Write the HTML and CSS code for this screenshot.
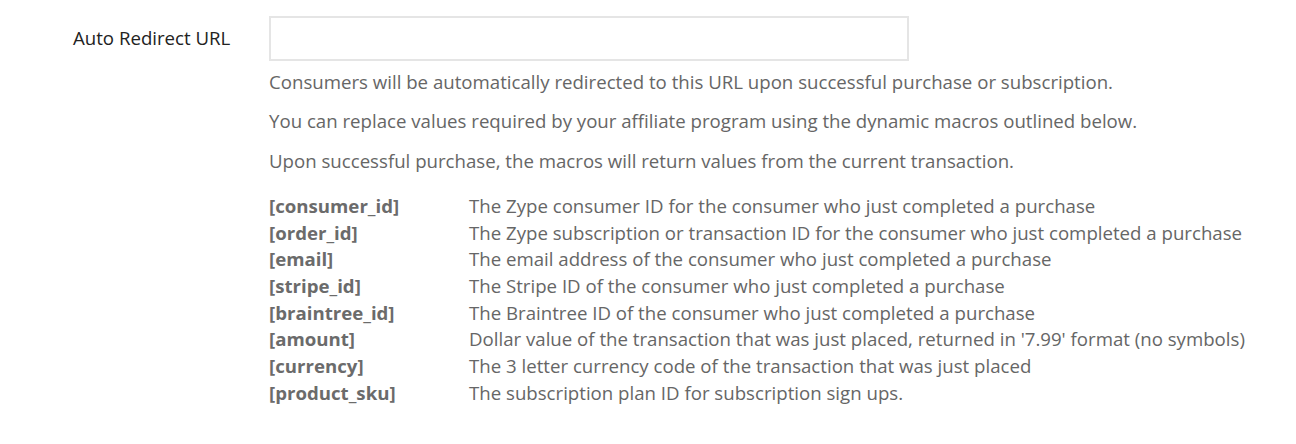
FILE: index.html
```html
<!DOCTYPE html>
<html lang="en">
<head>
  <meta charset="UTF-8" />
  <meta name="viewport" content="width=device-width, initial-scale=1.0" />
  <title>Auto Redirect URL</title>
  <link rel="stylesheet" href="styles.css">
</head>
<body>
  <div class="form-row">
    <label class="form-label" for="redirect-url">Auto Redirect URL</label>
    <div class="form-field">
      <input type="text" id="redirect-url" name="redirect-url" />
      <p class="help">Consumers will be automatically redirected to this URL upon successful purchase or subscription.</p>
      <p class="help">You can replace values required by your affiliate program using the dynamic macros outlined below.</p>
      <p class="help">Upon successful purchase, the macros will return values from the current transaction.</p>

      <table class="macros">
        <tr><th>[consumer_id]</th><td>The Zype consumer ID for the consumer who just completed a purchase</td></tr>
        <tr><th>[order_id]</th><td>The Zype subscription or transaction ID for the consumer who just completed a purchase</td></tr>
        <tr><th>[email]</th><td>The email address of the consumer who just completed a purchase</td></tr>
        <tr><th>[stripe_id]</th><td>The Stripe ID of the consumer who just completed a purchase</td></tr>
        <tr><th>[braintree_id]</th><td>The Braintree ID of the consumer who just completed a purchase</td></tr>
        <tr><th>[amount]</th><td>Dollar value of the transaction that was just placed, returned in '7.99' format (no symbols)</td></tr>
        <tr><th>[currency]</th><td>The 3 letter currency code of the transaction that was just placed</td></tr>
        <tr><th>[product_sku]</th><td>The subscription plan ID for subscription sign ups.</td></tr>
      </table>
    </div>
  </div>
</body>
</html>
```

FILE: styles.css
```css
body {
  font-family: 'Open Sans', sans-serif;
  font-size: 18.65px;
  margin: 0;
  background-color: #ffffff;
  color: #333;
}
.form-row {
  display: flex;
  padding: 16px 0 0 73px;
}
.form-label {
  width: 196px;
  flex-shrink: 0;
  line-height: 44px;
  color: #222;
}
.form-field {
  width: 1010px;
}
.form-field input[type="text"] {
  display: block;
  width: 640px;
  height: 45px;
  border: 2px solid #e5e5e5;
  border-radius: 0;
  box-sizing: border-box;
  margin: 0;
}
.help {
  margin: 8px 0 13.3px;
  line-height: 26px;
  color: #666;
}
.help + .help {
  margin-top: 0;
}
.macros {
  border-collapse: collapse;
  margin-top: 19.5px;
  color: #666;
}
.macros th,
.macros td {
  padding: 0;
  line-height: 26.65px;
  text-align: left;
  vertical-align: top;
  white-space: nowrap;
}
.macros th {
  width: 200px;
  font-weight: bold;
  color: #6b6b6b;
}
```
